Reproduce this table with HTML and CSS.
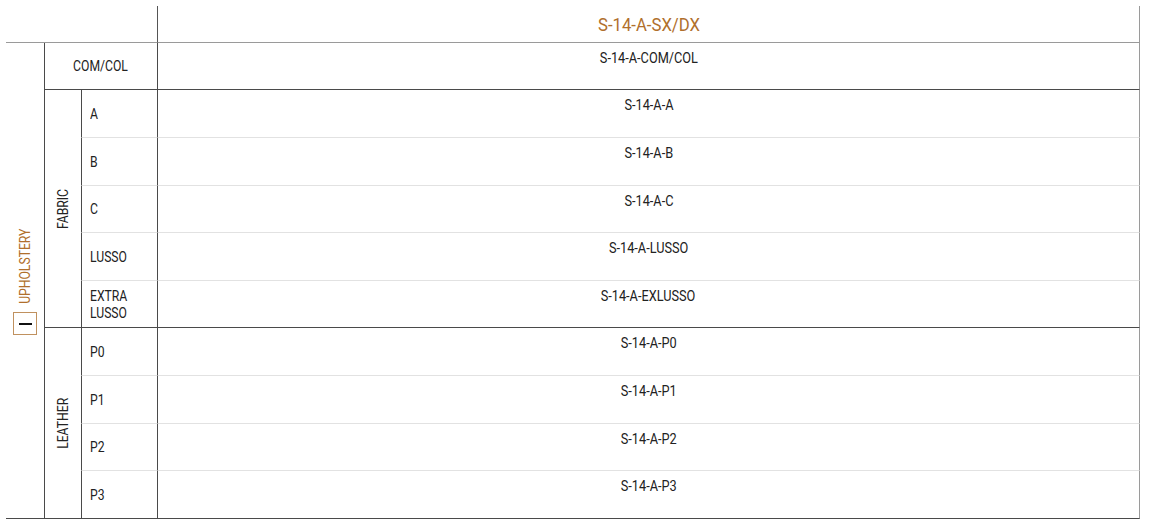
FILE: index.html
```html
<!DOCTYPE html>
<html lang="en">
<head>
<meta charset="utf-8">
<title>S-14-A-SX/DX</title>
<link rel="stylesheet" href="styles.css">
</head>
<body>
<div class="table">
  <div class="corner"></div>
  <div class="title"><span class="cond">S-14-A-SX/DX</span></div>

  <div class="group">
    <span class="group-label">UPHOLSTERY</span>
    <span class="toggle"><span class="dash"></span></span>
  </div>

  <div class="label-wide dark-bottom"><span class="cond">COM/COL</span></div>
  <div class="value dark-bottom"><span class="cond">S-14-A-COM/COL</span></div>

  <div class="sub sub-fabric"><span class="sub-label">FABRIC</span></div>
  <div class="label"><span class="cond-left">A</span></div>
  <div class="value"><span class="cond">S-14-A-A</span></div>
  <div class="label"><span class="cond-left">B</span></div>
  <div class="value"><span class="cond">S-14-A-B</span></div>
  <div class="label"><span class="cond-left">C</span></div>
  <div class="value"><span class="cond">S-14-A-C</span></div>
  <div class="label"><span class="cond-left">LUSSO</span></div>
  <div class="value"><span class="cond">S-14-A-LUSSO</span></div>
  <div class="label dark-bottom"><span class="cond-left">EXTRA<br>LUSSO</span></div>
  <div class="value dark-bottom"><span class="cond">S-14-A-EXLUSSO</span></div>

  <div class="sub sub-leather"><span class="sub-label">LEATHER</span></div>
  <div class="label"><span class="cond-left">P0</span></div>
  <div class="value"><span class="cond">S-14-A-P0</span></div>
  <div class="label"><span class="cond-left">P1</span></div>
  <div class="value"><span class="cond">S-14-A-P1</span></div>
  <div class="label"><span class="cond-left">P2</span></div>
  <div class="value"><span class="cond">S-14-A-P2</span></div>
  <div class="label dark-bottom"><span class="cond-left">P3</span></div>
  <div class="value dark-bottom"><span class="cond">S-14-A-P3</span></div>
</div>
</body>
</html>
```

FILE: styles.css
```css
html, body {
  margin: 0;
  padding: 0;
  background: #ffffff;
}

.table {
  display: grid;
  grid-template-columns: 38px 37px 76px 983px;
  grid-template-rows: 37px 47px 48px 48px 47px 48px 47px 48px 48px 47px 48px;
  margin: 6px 0 0 6px;
  font-family: Roboto, "Liberation Sans", sans-serif;
  font-size: 14px;
  color: #222222;
}

.table > div {
  box-sizing: border-box;
}

/* simulated condensed face */
.cond {
  display: inline-block;
  transform: scaleX(0.87);
  transform-origin: center;
}

.cond-left {
  display: inline-block;
  transform: scaleX(0.87);
  transform-origin: left center;
}

.corner {
  grid-column: 1 / 4;
  border-bottom: 1px solid #9a9a9a;
}

.title {
  grid-column: 4;
  border-left: 1px solid #555555;
  border-right: 1px solid #9a9a9a;
  border-bottom: 1px solid #9a9a9a;
  display: flex;
  align-items: center;
  justify-content: center;
  color: #b06f2c;
  font-size: 19px;
  padding-top: 1px;
}

.title .cond {
  transform: scaleX(0.88);
}

.group {
  grid-column: 1;
  grid-row: 2 / 12;
  border-bottom: 1px solid #4a4a4a;
  display: flex;
  flex-direction: column;
  align-items: center;
  justify-content: center;
  gap: 9px;
  padding-top: 3px;
}

.group-label {
  writing-mode: vertical-rl;
  transform: rotate(180deg) scaleY(0.87);
  color: #b06f2c;
  font-size: 14px;
  line-height: 14px;
  margin: -6px 0;
}

.toggle {
  width: 24px;
  height: 23px;
  box-sizing: border-box;
  border: 1.5px solid #c0915f;
  display: flex;
  align-items: center;
  justify-content: center;
}

.dash {
  width: 13px;
  height: 2px;
  background: #111111;
}

.label-wide {
  grid-column: 2 / 4;
  border-left: 1px solid #4a4a4a;
  display: flex;
  align-items: center;
  justify-content: center;
}

.sub {
  grid-column: 2;
  border-left: 1px solid #4a4a4a;
  border-bottom: 1px solid #4a4a4a;
  display: flex;
  align-items: center;
  justify-content: center;
}

.sub-fabric {
  grid-row: 3 / 8;
}

.sub-leather {
  grid-row: 8 / 12;
}

.sub-label {
  writing-mode: vertical-rl;
  transform: rotate(180deg) scaleY(0.87);
  line-height: 16px;
}

.label {
  grid-column: 3;
  border-left: 1px solid #4a4a4a;
  border-bottom: 1px solid #e2e2e2;
  display: flex;
  align-items: center;
  padding-left: 8px;
  line-height: 17px;
  padding-top: 1px;
}

.value {
  grid-column: 4;
  border-left: 1px solid #4a4a4a;
  border-right: 1px solid #9a9a9a;
  border-bottom: 1px solid #e2e2e2;
  text-align: center;
  padding-top: 7px;
  line-height: 16px;
}

.value .cond {
  transform: scaleX(0.91);
}

.table > .dark-bottom {
  border-bottom: 1px solid #4a4a4a;
}
```
